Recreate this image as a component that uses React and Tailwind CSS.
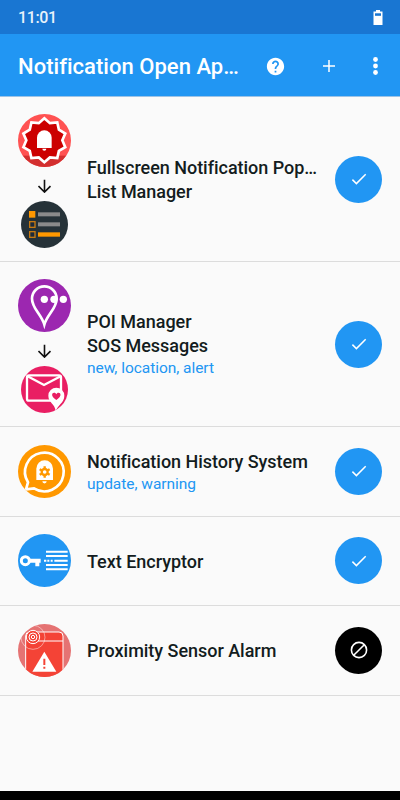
import React from "react";

function Disc({ small, color, children }) {
  const id = React.useId();
  const cy = small ? 148.5 : 107.5;
  const r = small ? 70.5 : 79.5;
  return (
    <svg
      className={small ? "block h-[47px] w-[47px]" : "block h-[53px] w-[53px]"}
      viewBox={small ? "33 78 141 141" : "24 28 159 159"}
      fill="none"
    >
      <clipPath id={id}>
        <circle cx="103.5" cy={cy} r={r} />
      </clipPath>
      <g clipPath={`url(#${id})`}>
        <rect x="0" y="0" width="220" height="240" fill={color} />
        {children}
      </g>
    </svg>
  );
}

function starPoints(cx, cy, outer, inner, count) {
  return Array.from({ length: count * 2 }, (_, i) => {
    const a = -Math.PI / 2 + (i * Math.PI) / count;
    const r = i % 2 ? inner : outer;
    return `${(cx + r * Math.cos(a)).toFixed(1)},${(cy + r * Math.sin(a)).toFixed(1)}`;
  }).join(" ");
}

const PopupIcon = () => (
  <Disc color="#ff5252">
    <rect x="20" y="153" width="170" height="40" fill="#d32f2f" />
    <polygon points={starPoints(103, 107, 66, 54, 10)} fill="#cc0000" stroke="#fff" strokeWidth="8" />
    <path d="M81 130V99a22 22 0 0 1 44 0v31z" fill="#fff" />
    <path d="M97 132h12a6 6 0 0 1-12 0z" fill="#fff" />
  </Disc>
);

const ListIcon = () => (
  <Disc small color="#263238">
    <rect x="57" y="108" width="19" height="20" fill="#ff9800" />
    <rect x="59" y="140" width="16" height="17" fill="#1c2a3a" stroke="#c77a12" strokeWidth="4" />
    <rect x="59" y="170" width="16" height="17" fill="#1c2a3a" stroke="#c77a12" strokeWidth="4" />
    <rect x="84" y="112" width="66" height="12" fill="#8a8a8a" />
    <rect x="84" y="142" width="66" height="12" fill="#8a8a8a" />
    <rect x="84" y="172" width="66" height="13" fill="#ff9800" />
  </Disc>
);

const PinIcon = () => (
  <Disc color="#9c27b0">
    <path d="M103 165C94 134 66 116 66 87a37 37 0 0 1 74 0c0 29-28 47-37 78z" stroke="#fff" strokeWidth="8" />
    <circle cx="103" cy="89" r="11" fill="#fff" />
    <circle cx="132" cy="89" r="11" fill="#fff" />
    <circle cx="160" cy="89" r="11" fill="#fff" />
  </Disc>
);

const MailIcon = () => (
  <Disc small color="#e91e63">
    <rect x="51" y="106" width="102" height="76" rx="6" stroke="#fff" strokeWidth="7" />
    <path d="M53 109l49 26 50-26" stroke="#fff" strokeWidth="7" />
    <path d="M137 214c-1-22-22-26-22-47a24 24 0 0 1 48 0c0 22-20 27-26 47z" fill="#fff" />
    <path d="M139 180c-18-12-13-22-7-22 4 0 6 2 7 5 1-3 3-5 7-5 6 0 11 10-7 22z" fill="#e91e63" />
  </Disc>
);

const HistoryIcon = () => (
  <Disc color="#ff9800">
    <path d="M54 140a58 58 0 1 1 18 18l-24 3z" stroke="#fff" strokeWidth="8" />
    <path d="M79 133V99a25 25 0 0 1 50 0v34z" fill="#fff" />
    <path d="M97 137h13a6 6 0 0 1-13 0z" fill="#fff" />
    <circle cx="104" cy="109" r="9" stroke="#ff9800" strokeWidth="7" />
    <path d="M104 92v7M104 119v7M89 100.500l6 3.500M113 114l6 3.500M89 117.500l6-3.500M113 104l6-3.500" stroke="#ff9800" strokeWidth="7" />
  </Disc>
);

const KeyIcon = () => (
  <Disc color="#2196f3">
    <circle cx="46" cy="108" r="12" stroke="#fff" strokeWidth="9" />
    <path d="M58 102h34v12h-4v11h-12v-11h-18z" fill="#fff" />
    <path d="M108 81h65M108 94h65M133 108h40M108 121h65M108 134h65" stroke="#fff" strokeWidth="6" />
    <path d="M102 108h7M112 108h6M122 108h6" stroke="#fff" strokeWidth="6" />
  </Disc>
);

const SensorIcon = () => (
  <Disc color="#e57373">
    <path d="M47 200V64q0-12 12-12h88q12 0 12 12v136z" fill="#f44336" stroke="#fff" strokeWidth="3" />
    <path d="M80 79h79" stroke="#fff" strokeWidth="3" />
    <circle cx="69" cy="68" r="36" stroke="#fff" strokeOpacity=".7" strokeWidth="2" />
    <circle cx="69" cy="67" r="20" fill="#f44336" stroke="#fff" strokeWidth="3" />
    <circle cx="69" cy="67" r="12" stroke="#fff" strokeWidth="3" />
    <circle cx="69" cy="67" r="5" stroke="#fff" strokeWidth="3" />
    <path d="M103 111l36 60H67z" fill="#fff" />
    <path d="M103 132v19M103 156v6" stroke="#f44336" strokeWidth="6" />
  </Disc>
);

const Arrow = () => (
  <svg className="mt-[12px] mb-[8px] block h-[14px] w-[14px]" viewBox="0 0 14 14" fill="none" stroke="#111" strokeWidth="1.600">
    <path d="M6.500 .8v12M.5 7.100l6 6 6-6" />
  </svg>
);

function Status({ blocked, raised }) {
  return (
    <div
      className={
        "flex h-[47px] w-[47px] shrink-0 items-center justify-center rounded-full " +
        (raised ? "mb-[4px] " : "") +
        (blocked ? "bg-black" : "bg-[#2196f3]")
      }
    >
      {blocked ? (
        <svg className="h-[18px] w-[18px]" viewBox="0 0 18 18" fill="none" stroke="#fff" strokeWidth="1.600">
          <circle cx="9" cy="9" r="7.600" />
          <path d="M3.700 14.300L14.300 3.700" />
        </svg>
      ) : (
        <svg className="h-[18px] w-[18px]" viewBox="0 0 18 18" fill="none" stroke="#fff" strokeWidth="1.500">
          <path d="M2.400 9.600l4 4L15.700 4.300" />
        </svg>
      )}
    </div>
  );
}

const rows = [
  { height: "h-[165px] pb-[13px]", from: <PopupIcon />, to: <ListIcon />, titles: ["Fullscreen Notification Pop…", "List Manager"] },
  { height: "h-[165px] pb-[13px]", from: <PinIcon />, to: <MailIcon />, titles: ["POI Manager", "SOS Messages"], tags: "new, location, alert" },
  { height: "h-[90px] pb-[18px]", from: <HistoryIcon />, titles: ["Notification History System"], tags: "update, warning" },
  { height: "h-[89px] pb-[18px]", from: <KeyIcon />, titles: ["Text Encryptor"] },
  { height: "h-[90px] pb-[18px]", from: <SensorIcon />, titles: ["Proximity Sensor Alarm"], blocked: true },
];

export default function App() {
  return (
    <div className="flex h-[800px] w-[400px] flex-col overflow-hidden bg-[#fafafa] font-['Roboto',sans-serif]">
      <div className="flex h-[34px] shrink-0 items-center justify-between bg-[#1976d2] pr-[17px] pl-[18px] text-white">
        <span className="pt-[1px] text-[16px] leading-[33px] font-medium tracking-[-0.4px] text-[#e8f1fa]">11:01</span>
        <svg className="h-[15px] w-[10px]" viewBox="0 0 10 15">
          <path d="M3 0h4v1.500h2.500v13.500h-9V1.500H3z" fill="#fff" />
          <rect x="2" y="3.300" width="6" height="2.500" fill="#1976d2" />
        </svg>
      </div>
      <header className="flex h-[63px] shrink-0 items-center border-b border-[#9dc3e6] bg-[#2196f3] pt-[2px] pl-[18px] text-white">
        <h1 className="w-[248px] pt-[2px] text-[22px] leading-[28px] font-medium tracking-[0.03px] whitespace-nowrap">
          Notification Open Ap…
        </h1>
        <svg className="h-[19px] w-[19px]" viewBox="1 1 22 22" fill="#fff">
          <path d="M12 2C6.480 2 2 6.480 2 12s4.480 10 10 10 10-4.480 10-10S17.520 2 12 2zm1 17h-2v-2h2v2zm2.070-7.750l-.9.920C13.450 12.900 13 13.500 13 15h-2v-.5c0-1.100.45-2.100 1.170-2.830l1.240-1.260c.37-.36.59-.86.59-1.410 0-1.100-.9-2-2-2s-2 .9-2 2H8c0-2.210 1.790-4 4-4s4 1.790 4 4c0 .88-.36 1.680-.93 2.250z" />
        </svg>
        <svg className="ml-[37px] h-[14px] w-[14px]" viewBox="0 0 14 14" stroke="#fff" strokeWidth="1.500">
          <path d="M7 1v12M1 7h12" />
        </svg>
        <svg className="ml-[37px] h-[20px] w-[6px]" viewBox="0 0 6 20" fill="#fff">
          <circle cx="2.500" cy="3.500" r="2.400" />
          <circle cx="2.500" cy="10" r="2.400" />
          <circle cx="2.500" cy="16.500" r="2.400" />
        </svg>
      </header>
      <main className="flex-1">
        {rows.map((row) => (
          <section
            key={row.titles[0]}
            className={"flex items-center border-b border-[#dcdcdc] pt-[17px] pr-[18px] pl-[18px] " + row.height}
          >
            <div className="flex w-[69px] shrink-0 flex-col items-center pr-[16px]">
              {row.from}
              {row.to && <Arrow />}
              {row.to}
            </div>
            <div
              className={
                "min-w-0 flex-1 whitespace-nowrap " + (row.to ? (row.tags ? "pb-[3px]" : "pb-[2px]") : "pt-[2px]")
              }
            >
              {row.titles.map((title) => (
                <div key={title} className="text-[18px] leading-[24px] font-medium tracking-[-0.03px] text-[#131c20]">
                  {title}
                </div>
              ))}
              {row.tags && (
                <div className="text-[15.500px] leading-[21px] tracking-[-0.04px] text-[#2196f3]">{row.tags}</div>
              )}
            </div>
            <Status blocked={row.blocked} raised={Boolean(row.to)} />
          </section>
        ))}
      </main>
      <div className="h-[9px] shrink-0 bg-black" />
    </div>
  );
}
